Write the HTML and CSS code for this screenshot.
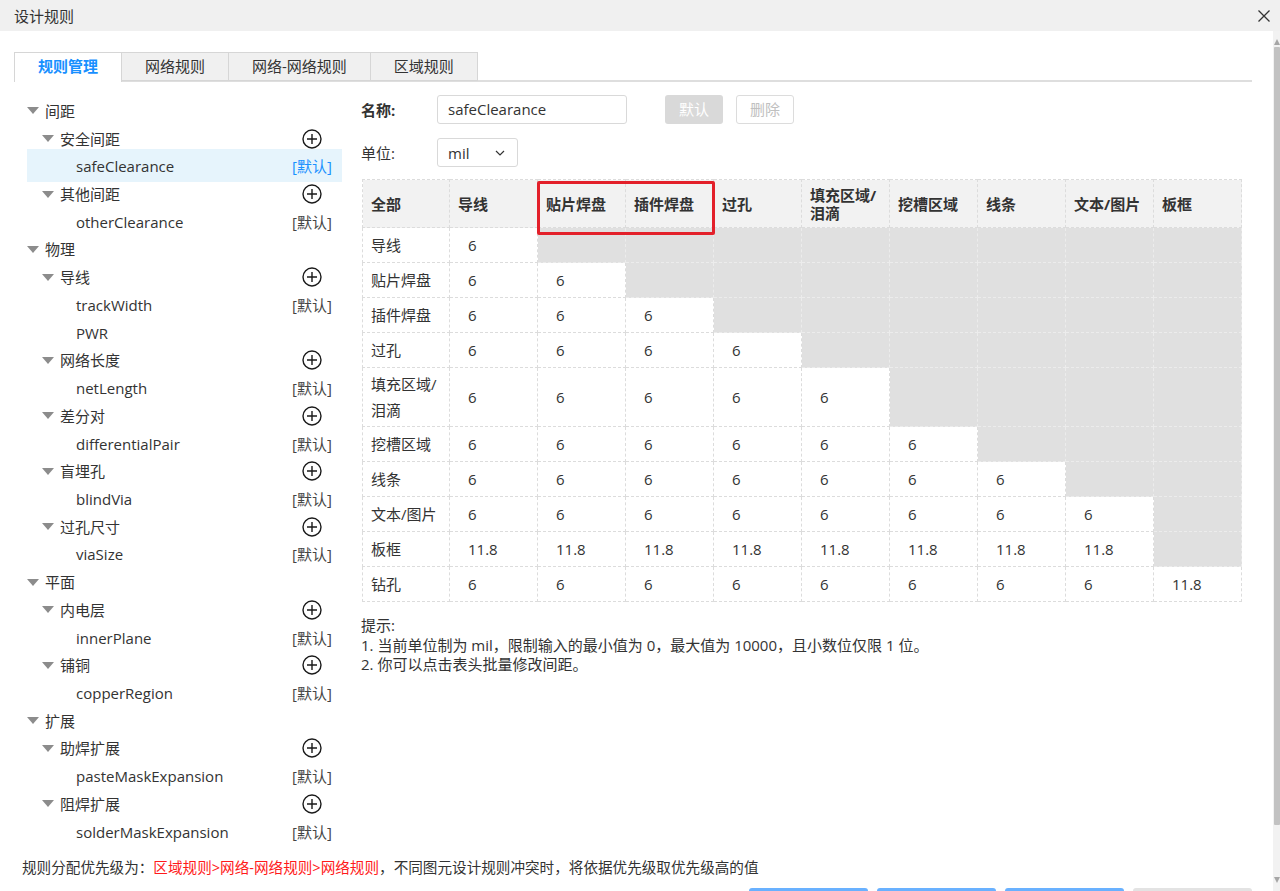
FILE: index.html
```html
<!DOCTYPE html>
<html lang="zh-CN">
<head>
<meta charset="utf-8">
<title>设计规则</title>
<link rel="stylesheet" href="styles.css">
</head>
<body>
<div class="titlebar">
  <span class="title">设计规则</span>
  <svg class="close" width="12" height="12" viewBox="0 0 12 12"><path d="M0.5 0.5 L11.5 11.5 M11.5 0.5 L0.5 11.5" stroke="#333" stroke-width="1.3" fill="none"/></svg>
</div>
<div class="window">
  <div class="content">
    <div class="tabs">
      <div class="tab active">规则管理</div>
      <div class="tab">网络规则</div>
      <div class="tab">网络-网络规则</div>
      <div class="tab">区域规则</div>
    </div>
    <div class="main">
      <div class="tree">
        <div class="node l0"><i class="caret"></i><span>间距</span></div>
        <div class="node l1"><i class="caret"></i><span>安全间距</span><span class="slot"><svg class="plus" width="20" height="20" viewBox="0 0 20 20"><circle cx="10" cy="10" r="9" /><path d="M5 10 H15 M10 5 V15"/></svg></span></div>
        <div class="node l2 active"><span>safeClearance</span><span class="slot def">[默认]</span></div>
        <div class="node l1"><i class="caret"></i><span>其他间距</span><span class="slot"><svg class="plus" width="20" height="20" viewBox="0 0 20 20"><circle cx="10" cy="10" r="9" /><path d="M5 10 H15 M10 5 V15"/></svg></span></div>
        <div class="node l2"><span>otherClearance</span><span class="slot def">[默认]</span></div>
        <div class="node l0"><i class="caret"></i><span>物理</span></div>
        <div class="node l1"><i class="caret"></i><span>导线</span><span class="slot"><svg class="plus" width="20" height="20" viewBox="0 0 20 20"><circle cx="10" cy="10" r="9" /><path d="M5 10 H15 M10 5 V15"/></svg></span></div>
        <div class="node l2"><span>trackWidth</span><span class="slot def">[默认]</span></div>
        <div class="node l2"><span>PWR</span></div>
        <div class="node l1"><i class="caret"></i><span>网络长度</span><span class="slot"><svg class="plus" width="20" height="20" viewBox="0 0 20 20"><circle cx="10" cy="10" r="9" /><path d="M5 10 H15 M10 5 V15"/></svg></span></div>
        <div class="node l2"><span>netLength</span><span class="slot def">[默认]</span></div>
        <div class="node l1"><i class="caret"></i><span>差分对</span><span class="slot"><svg class="plus" width="20" height="20" viewBox="0 0 20 20"><circle cx="10" cy="10" r="9" /><path d="M5 10 H15 M10 5 V15"/></svg></span></div>
        <div class="node l2"><span>differentialPair</span><span class="slot def">[默认]</span></div>
        <div class="node l1"><i class="caret"></i><span>盲埋孔</span><span class="slot"><svg class="plus" width="20" height="20" viewBox="0 0 20 20"><circle cx="10" cy="10" r="9" /><path d="M5 10 H15 M10 5 V15"/></svg></span></div>
        <div class="node l2"><span>blindVia</span><span class="slot def">[默认]</span></div>
        <div class="node l1"><i class="caret"></i><span>过孔尺寸</span><span class="slot"><svg class="plus" width="20" height="20" viewBox="0 0 20 20"><circle cx="10" cy="10" r="9" /><path d="M5 10 H15 M10 5 V15"/></svg></span></div>
        <div class="node l2"><span>viaSize</span><span class="slot def">[默认]</span></div>
        <div class="node l0"><i class="caret"></i><span>平面</span></div>
        <div class="node l1"><i class="caret"></i><span>内电层</span><span class="slot"><svg class="plus" width="20" height="20" viewBox="0 0 20 20"><circle cx="10" cy="10" r="9" /><path d="M5 10 H15 M10 5 V15"/></svg></span></div>
        <div class="node l2"><span>innerPlane</span><span class="slot def">[默认]</span></div>
        <div class="node l1"><i class="caret"></i><span>铺铜</span><span class="slot"><svg class="plus" width="20" height="20" viewBox="0 0 20 20"><circle cx="10" cy="10" r="9" /><path d="M5 10 H15 M10 5 V15"/></svg></span></div>
        <div class="node l2"><span>copperRegion</span><span class="slot def">[默认]</span></div>
        <div class="node l0"><i class="caret"></i><span>扩展</span></div>
        <div class="node l1"><i class="caret"></i><span>助焊扩展</span><span class="slot"><svg class="plus" width="20" height="20" viewBox="0 0 20 20"><circle cx="10" cy="10" r="9" /><path d="M5 10 H15 M10 5 V15"/></svg></span></div>
        <div class="node l2"><span>pasteMaskExpansion</span><span class="slot def">[默认]</span></div>
        <div class="node l1"><i class="caret"></i><span>阻焊扩展</span><span class="slot"><svg class="plus" width="20" height="20" viewBox="0 0 20 20"><circle cx="10" cy="10" r="9" /><path d="M5 10 H15 M10 5 V15"/></svg></span></div>
        <div class="node l2"><span>solderMaskExpansion</span><span class="slot def">[默认]</span></div>
      </div>
      <div class="panel">
        <div class="field">
          <label class="lbl bold">名称:</label>
          <div class="input">safeClearance</div>
          <div class="btn btn-default">默认</div>
          <div class="btn btn-delete">删除</div>
        </div>
        <div class="field second">
          <label class="lbl">单位:</label>
          <div class="select"><span>mil</span><svg width="10" height="6" viewBox="0 0 10 6"><path d="M1 1 L5 5 L9 1" stroke="#333" stroke-width="1.2" fill="none"/></svg></div>
        </div>
        <div class="table-wrap">
          <table class="grid">
            <colgroup>
              <col class="c0"><col class="c"><col class="c"><col class="c"><col class="c"><col class="c"><col class="c"><col class="c"><col class="c"><col class="c">
            </colgroup>
            <thead>
              <tr><th>全部</th><th>导线</th><th>贴片焊盘</th><th>插件焊盘</th><th>过孔</th><th>填充区域/<br>泪滴</th><th>挖槽区域</th><th>线条</th><th>文本/图片</th><th>板框</th></tr>
            </thead>
            <tbody>
              <tr><td class="lab">导线</td><td>6</td><td class="na"></td><td class="na"></td><td class="na"></td><td class="na"></td><td class="na"></td><td class="na"></td><td class="na"></td><td class="na"></td></tr>
              <tr><td class="lab">贴片焊盘</td><td>6</td><td>6</td><td class="na"></td><td class="na"></td><td class="na"></td><td class="na"></td><td class="na"></td><td class="na"></td><td class="na"></td></tr>
              <tr><td class="lab">插件焊盘</td><td>6</td><td>6</td><td>6</td><td class="na"></td><td class="na"></td><td class="na"></td><td class="na"></td><td class="na"></td><td class="na"></td></tr>
              <tr><td class="lab">过孔</td><td>6</td><td>6</td><td>6</td><td>6</td><td class="na"></td><td class="na"></td><td class="na"></td><td class="na"></td><td class="na"></td></tr>
              <tr class="tall"><td class="lab two">填充区域/<br>泪滴</td><td>6</td><td>6</td><td>6</td><td>6</td><td>6</td><td class="na"></td><td class="na"></td><td class="na"></td><td class="na"></td></tr>
              <tr><td class="lab">挖槽区域</td><td>6</td><td>6</td><td>6</td><td>6</td><td>6</td><td>6</td><td class="na"></td><td class="na"></td><td class="na"></td></tr>
              <tr><td class="lab">线条</td><td>6</td><td>6</td><td>6</td><td>6</td><td>6</td><td>6</td><td>6</td><td class="na"></td><td class="na"></td></tr>
              <tr><td class="lab">文本/图片</td><td>6</td><td>6</td><td>6</td><td>6</td><td>6</td><td>6</td><td>6</td><td>6</td><td class="na"></td></tr>
              <tr><td class="lab">板框</td><td>11.8</td><td>11.8</td><td>11.8</td><td>11.8</td><td>11.8</td><td>11.8</td><td>11.8</td><td>11.8</td><td class="na"></td></tr>
              <tr><td class="lab">钻孔</td><td>6</td><td>6</td><td>6</td><td>6</td><td>6</td><td>6</td><td>6</td><td>6</td><td>11.8</td></tr>
            </tbody>
          </table>
          <div class="highlight-box"></div>
        </div>
        <div class="tips">
          <div>提示:</div>
          <div>1. 当前单位制为 mil，限制输入的最小值为 0，最大值为 10000，且小数位仅限 1 位。</div>
          <div>2. 你可以点击表头批量修改间距。</div>
        </div>
      </div>
    </div>
    <div class="note">规则分配优先级为：<span class="red">区域规则&gt;网络-网络规则&gt;网络规则</span>，不同图元设计规则冲突时，将依据优先级取优先级高的值</div>
    <div class="actions">
      <div class="abtn primary"></div>
      <div class="abtn primary"></div>
      <div class="abtn primary"></div>
      <div class="abtn plain"></div>
    </div>
  </div>
  <div class="scrollbar">
    <i class="arrow up"></i>
    <div class="thumb"></div>
    <i class="arrow down"></i>
  </div>
</div>
</body>
</html>
```
FILE: styles.css
```css
* { box-sizing: border-box; }
html, body { margin: 0; padding: 0; height: 891px; overflow: hidden; }
body {
  font-family: "Open Sans", "Noto Sans CJK SC", sans-serif;
  font-size: 15px;
  color: #333;
  background: #fff;
}

.titlebar {
  height: 31px;
  background: #f0f0f0;
  display: flex;
  align-items: center;
  justify-content: space-between;
  padding: 0 10px 0 14px;
}
.title { font-size: 15px; line-height: 20px; color: #333; }
.close { display: block; }

.window { display: flex; height: 860px; }
.content { flex: 1; padding: 21px 21px 0 14px; }

.tabs {
  display: flex;
  height: 30px;
  border-bottom: 2px solid #dedede;
}
.tab {
  height: 29px;
  padding: 0 23px;
  line-height: 26px;
  background: #f0f0f0;
  border: 1px solid #d6d6d6;
  margin-left: -1px;
  color: #333;
}
.tab:first-child { margin-left: 0; }
.tab.active {
  background: #fff;
  color: #1890ff;
  font-weight: bold;
  height: 30px;
  border-bottom: none;
}

.main { display: flex; }
.tree { width: 315px; margin-left: 13px; padding-top: 15px; }
.node {
  display: flex;
  align-items: center;
  height: 27.73px;
  line-height: 20px;
  padding-right: 10px;
}
.node.l0 { padding-left: 0; }
.node.l1 { padding-left: 15px; }
.node.l2 { padding-left: 49px; }
.node.active {
  background: #e6f4fc;
  height: 33px;
  margin: -3px 0 -2.27px;
}
.caret {
  display: block;
  width: 0;
  height: 0;
  border-left: 6px solid transparent;
  border-right: 6px solid transparent;
  border-top: 7px solid #8c8c8c;
  margin-right: 6px;
}
.slot {
  margin-left: auto;
  width: 40px;
  display: flex;
  justify-content: center;
  color: #444;
}
.node.active .def { color: #1890ff; }
.plus { display: block; fill: none; stroke: #1a1a1a; stroke-width: 1.4; }

.panel { margin-left: 19px; padding-top: 13px; }
.field { display: flex; align-items: center; height: 29px; }
.field.second { margin-top: 14px; }
.lbl { width: 76px; }
.bold { font-weight: bold; }
.input {
  width: 190px;
  height: 29px;
  border: 1px solid #d9d9d9;
  border-radius: 3px;
  padding-left: 10px;
  line-height: 27px;
}
.btn {
  width: 58px;
  height: 29px;
  border-radius: 3px;
  text-align: center;
  line-height: 29px;
}
.btn-default { margin-left: 38px; background: #d9d9d9; color: #fff; }
.btn-delete { margin-left: 13px; border: 1px solid #dcdcdc; color: #c0c0c0; line-height: 27px; }
.select {
  width: 81px;
  height: 29px;
  border: 1px solid #d9d9d9;
  border-radius: 3px;
  padding: 0 12px 0 10px;
  display: flex;
  align-items: center;
  justify-content: space-between;
}

.table-wrap { position: relative; margin-top: 12px; margin-left: 1px; width: 879px; }
.grid {
  border-collapse: collapse;
  table-layout: fixed;
  width: 879px;
}
.grid col.c0 { width: 87px; }
.grid col.c { width: 88px; }
.grid th, .grid td {
  border: 1px dashed #dcdcdc;
  text-align: left;
  vertical-align: middle;
  padding: 0;
}
.grid th {
  height: 48px;
  background: #f2f2f2;
  font-weight: bold;
  line-height: 18px;
  padding-left: 8px;
}
.grid td { height: 35px; padding-left: 18px; line-height: 20px; }
.grid td.lab { padding-left: 8px; background: #fff; }
.grid tr.tall td { height: 59px; }
.grid td.two { line-height: 26px; }
.grid td.na { background: #e0e0e0; border-color: #ececec; }
.highlight-box {
  position: absolute;
  left: 175px;
  top: 2px;
  width: 178px;
  height: 54px;
  border: 3px solid #e3202a;
  border-radius: 2px;
}

.tips { margin-top: 14px; font-size: 15px; line-height: 19.5px; }

.note { margin-top: 12px; padding-left: 8px; font-size: 14.6px; line-height: 20px; }
.red { color: #ff1a1a; }

.actions { display: flex; justify-content: flex-end; gap: 9px; margin-top: 11px; }
.abtn { width: 119px; height: 32px; border-radius: 3px; }
.abtn.primary { background: #69b1ff; }
.abtn.plain { background: #e3e3e3; }

.scrollbar {
  width: 7px;
  background: #f2f2f2;
  display: flex;
  flex-direction: column;
  align-items: center;
  padding-top: 8px;
}
.arrow { display: block; width: 0; height: 0; border-left: 3px solid transparent; border-right: 3px solid transparent; }
.arrow.up { border-bottom: 6px solid #a6a6a6; }
.arrow.down { border-top: 6px solid #a6a6a6; margin-top: 52px; }
.thumb { width: 6px; height: 778px; margin-top: 2px; background: #c2c2c2; border-radius: 1px; }
```
